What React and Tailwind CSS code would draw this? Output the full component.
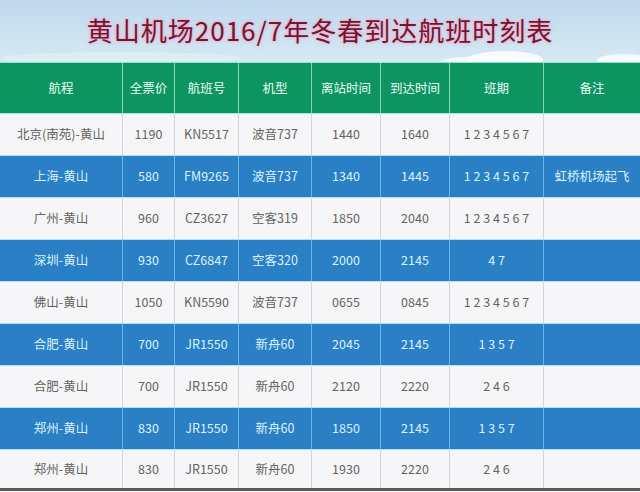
import React from "react";

const flights = [
  { route: "北京(南苑)-黄山", price: "1190", no: "KN5517", plane: "波音737", dep: "1440", arr: "1640", days: "1 2 3 4 5 6 7", note: "" },
  { route: "上海-黄山", price: "580", no: "FM9265", plane: "波音737", dep: "1340", arr: "1445", days: "1 2 3 4 5 6 7", note: "虹桥机场起飞" },
  { route: "广州-黄山", price: "960", no: "CZ3627", plane: "空客319", dep: "1850", arr: "2040", days: "1 2 3 4 5 6 7", note: "" },
  { route: "深圳-黄山", price: "930", no: "CZ6847", plane: "空客320", dep: "2000", arr: "2145", days: "4 7", note: "" },
  { route: "佛山-黄山", price: "1050", no: "KN5590", plane: "波音737", dep: "0655", arr: "0845", days: "1 2 3 4 5 6 7", note: "" },
  { route: "合肥-黄山", price: "700", no: "JR1550", plane: "新舟60", dep: "2045", arr: "2145", days: "1 3 5 7", note: "" },
  { route: "合肥-黄山", price: "700", no: "JR1550", plane: "新舟60", dep: "2120", arr: "2220", days: "2 4 6", note: "" },
  { route: "郑州-黄山", price: "830", no: "JR1550", plane: "新舟60", dep: "1850", arr: "2145", days: "1 3 5 7", note: "" },
  { route: "郑州-黄山", price: "830", no: "JR1550", plane: "新舟60", dep: "1930", arr: "2220", days: "2 4 6", note: "" },
];

const heads = ["航程", "全票价", "航班号", "机型", "离站时间", "到达时间", "班期", "备注"];

const cols = "grid grid-cols-[122px_52px_64px_73px_69px_69px_94px_97px]";

const FlightTable = () => {
  return (
    <div
      className="w-[640px] h-[492px] overflow-hidden bg-[#f5f5f7]"
      style={{ fontFamily: '"Noto Sans CJK SC", "Noto Sans", sans-serif' }}
    >
      {/* title band */}
      <div className="relative h-[62px] bg-gradient-to-b from-[#bfd9ee] to-[#d5e9f3] flex items-center justify-center">
        <svg className="absolute left-0 top-0" width="640" height="62" viewBox="0 0 640 62">
          <ellipse cx="505" cy="60" rx="38" ry="9" fill="#ffffff" opacity="0.85" />
          <ellipse cx="490" cy="62" rx="50" ry="6" fill="#ffffff" opacity="0.7" />
          <ellipse cx="625" cy="60" rx="28" ry="6" fill="#ffffff" opacity="0.8" />
          <ellipse cx="120" cy="58" rx="120" ry="6" fill="#e2f1f7" opacity="0.6" />
        </svg>
        <h1 className="relative text-[26px] leading-none tracking-[1px] font-normal text-[#6f1733] [text-shadow:0_0_4px_#f7a1bf,0_0_2px_#f7a1bf] mt-[-2px]">
          黄山机场2016/7年冬春到达航班时刻表
        </h1>
      </div>
      <div className="h-[1px] bg-[#8fe6d2]" />

      {/* header */}
      <div className={`${cols} h-[50px] bg-[#0e9461] text-[#e8fff4] text-[12.5px]`}>
        {heads.map((h, i) => (
          <div
            key={h}
            className={`flex items-center justify-center ${i > 0 ? "border-l border-[#7fd8b4]" : ""}`}
          >
            {h}
          </div>
        ))}
      </div>

      {/* rows */}
      {flights.map((f, r) => {
        const blue = r % 2 === 1;
        const last = r === flights.length - 1;
        const cells = [f.route, f.price, f.no, f.plane, f.dep, f.arr, f.days, f.note];
        return (
          <div
            key={r}
            className={`${cols} h-[42px] border-t border-[#a6e3f3] text-[12.5px] ${
              blue ? "bg-[#2a7fc5] text-[#dcf3ff]" : "bg-[#f6f6f8] text-[#636363]"
            } ${last ? "border-b-[3px] border-b-[#5a5a5a]" : ""}`}
          >
            {cells.map((c, i) => (
              <div
                key={i}
                className={`flex items-center justify-center whitespace-pre ${
                  i > 0 ? (blue ? "border-l border-[#68b3e8]" : "border-l border-[#d6d6d8]") : ""
                }`}
              >
                {c}
              </div>
            ))}
          </div>
        );
      })}
    </div>
  );
};

export default function App() {
  return <FlightTable />;
}
